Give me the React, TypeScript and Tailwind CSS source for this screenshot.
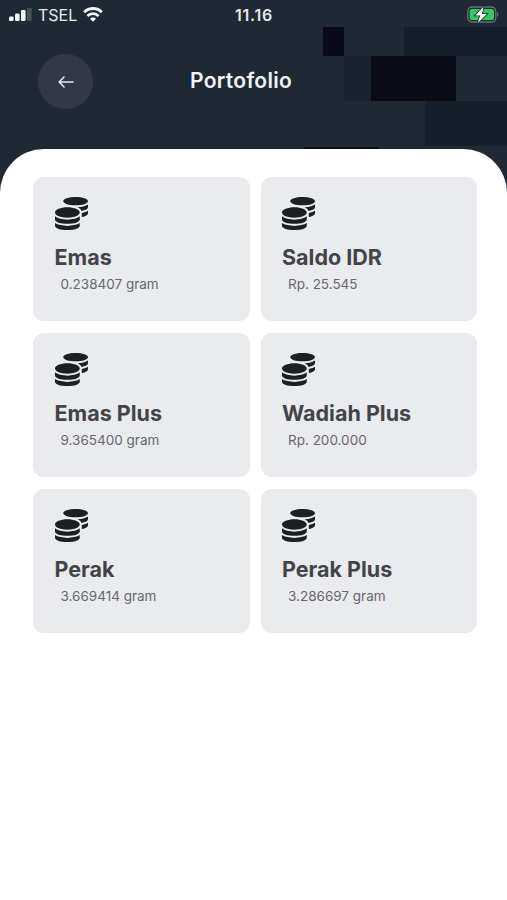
import { FaCoins } from "react-icons/fa"

interface Asset {
  name: string
  amount: string
}

const assets: Asset[] = [
  { name: "Emas", amount: "0.238407 gram" },
  { name: "Saldo IDR", amount: "Rp. 25.545" },
  { name: "Emas Plus", amount: "9.365400 gram" },
  { name: "Wadiah Plus", amount: "Rp. 200.000" },
  { name: "Perak", amount: "3.669414 gram" },
  { name: "Perak Plus", amount: "3.286697 gram" },
]

// Dark mosaic behind the header
const HeaderBlocks = () => (
  <div
    className="absolute inset-x-0 top-0 grid grid-cols-[19px_21px_27px_8px_25px_21px_31px_51px] grid-rows-[29px_45px_45px_4px] justify-end pt-[27px]"
    aria-hidden="true"
  >
    <div className="col-start-2 row-start-1 bg-[#080b17]" />
    <div className="col-span-3 col-start-6 row-start-1 bg-[#171e2b]" />
    <div className="col-start-3 row-start-2 bg-[#18212f]" />
    <div className="col-span-4 col-start-4 row-start-2 bg-[#090c14]" />
    <div className="col-span-2 col-start-7 row-start-3 bg-[#161d2b]" />
    <div className="col-span-4 col-start-1 row-start-4 mt-px bg-[#090c14]" />
  </div>
)

const StatusBar = () => (
  <div className="relative grid h-[29px] grid-cols-[1fr_auto_1fr] items-center pl-[9px] pr-[8px] text-[#e4e8ef]">
    <div className="flex items-center">
      <svg width="23" height="13" viewBox="0 0 23 13" fill="#f3f5f8">
        <rect x="0" y="8.5" width="4.6" height="4.5" rx="1.2" />
        <rect x="6" y="5.5" width="4.6" height="7.5" rx="1.2" />
        <rect x="12" y="2" width="4.6" height="11" rx="1.2" />
        <rect x="18" y="0" width="4.6" height="13" rx="1.2" fill="#4b535f" />
      </svg>
      <span className="ml-1.5 text-base leading-none">TSEL</span>
      <svg className="ml-1.5" width="20" height="15" viewBox="0 0 20 15" fill="none" stroke="#f3f5f8">
        <path d="M1.2 5.2a12.6 12.6 0 0 1 17.6 0" strokeWidth="3" />
        <path d="M4.4 9a8 8 0 0 1 11.2 0" strokeWidth="2.7" />
        <path d="M10 14.8l-3-3.1a4.2 4.2 0 0 1 6 0z" fill="#f3f5f8" stroke="none" />
      </svg>
    </div>
    <span className="text-base font-semibold leading-none tracking-[0.8px]">11.16</span>
    <svg className="justify-self-end" width="33" height="18" viewBox="0 0 33 18">
      <rect x="1.8" y="1" width="28" height="15" rx="4.3" fill="none" stroke="#68717b" strokeWidth="1.3" />
      <rect x="3.6" y="3" width="24.4" height="11" rx="2.6" fill="#35c759" />
      <path d="M31 6.3c1 .4 1.4 1.2 1.4 2.2s-.4 1.8-1.400 2.200z" fill="#68717b" />
      <path
        d="M17.6 0.8L9.200 9.400h5l-2.300 7.400 9-8.800h-5z"
        fill="#fff"
        stroke="#1f2933"
        strokeWidth="1.6"
        paintOrder="stroke"
      />
    </svg>
  </div>
)

const AssetCard = ({ name, amount }: Asset) => (
  <div className="h-36 rounded-[11px] bg-[#eaebef] pl-[21.5px] pt-5">
    <FaCoins className="size-[33px] text-[#1d1f21]" />
    <h2 className="mt-[13px] text-[21.5px] font-bold leading-7 text-[#434449]">{name}</h2>
    <p className="ml-1.5 mt-[3px] text-[13.5px] leading-5 text-[#67686d]">{amount}</p>
  </div>
)

export default function App() {
  return (
    <div className="relative flex h-[900px] w-[507px] flex-col overflow-hidden bg-[#1f2933] font-['Inter',sans-serif]">
      <HeaderBlocks />
      <StatusBar />
      <header className="relative grid h-[120px] grid-cols-[55px_auto_1fr] items-center gap-x-[97px] pb-[15px] pl-[38px]">
        <button aria-label="Kembali" className="flex size-[55px] items-center justify-center rounded-full bg-[#323945]">
          <svg width="16" height="12" viewBox="0 0 16 12" fill="none" stroke="#e8ebf0" strokeWidth="1.5">
            <path d="M15 6H1.2M6 1L1.2 6 6 11" strokeLinecap="round" strokeLinejoin="round" />
          </svg>
        </button>
        <h1 className="pb-0.5 text-[21px] font-semibold leading-7 tracking-[0.3px] text-[#f0f2f7]">Portofolio</h1>
      </header>
      <main className="relative flex-1 rounded-t-[44px] bg-white pl-[33px] pr-[30px] pt-7">
        <div className="grid grid-cols-2 gap-x-[11px] gap-y-3">
          {assets.map((asset) => (
            <AssetCard key={asset.name} {...asset} />
          ))}
        </div>
      </main>
    </div>
  )
}
